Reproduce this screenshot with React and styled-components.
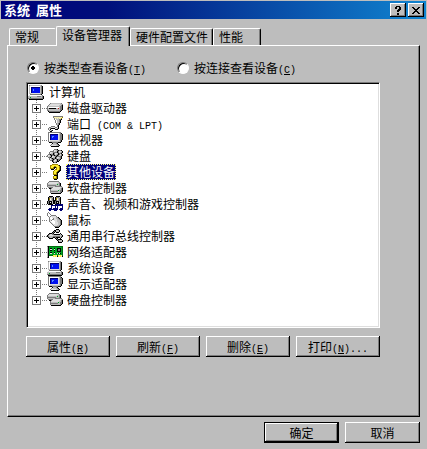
import React, {useState} from "react";
import styled, {createGlobalStyle} from "styled-components";

//Colours of the pixel icons
const palette = {
	K: "#000000",
	W: "#ffffff",
	E: "#dedede",
	L: "#bdbdbd",
	D: "#7b7b7b",
	B: "#0010ef",
	N: "#000073",
	C: "#5a8cff",
	G: "#00a521",
	F: "#006b10",
	Y: "#ffef31",
	O: "#9c8400",
	R: "#bd1818",
	P: "#f7efad",
};

//Pixel icons, one letter for each pixel
const icons = {
	computer: [
		"................",
		".DLLLLLLLLLLLD..",
		".LWWWWWWWWWWLDK.",
		".LWNNNNNNNNNLDK.",
		".LWNBBBBBBBBLDK.",
		".LWNBCBBBBBBLDK.",
		".LWNBCBBBBBBLDK.",
		".LWNBBBBBBBBLDK.",
		".LWNBBBBBBBBLDK.",
		".LLEEEEEEEEELDK.",
		"..DDDDDDDDDDDK..",
		".EWWWWWWWWWWWED.",
		"LLLLLLLLLDDDDLDK",
		"LLGLLLLLLLLLLLDK",
		"DDDDDDDDDDDDDDDK",
		".KKKKKKKKKKKKKK.",
	],
	drive: [
		"................",
		"................",
		"................",
		"...DLLLLLLLLLLD.",
		"..DEEEEEEEEEELLD",
		".DEEEEEEEEEELLDK",
		"DLLLLLLLLLLLLDDK",
		"DWWWWWWWWWWWLDDK",
		"DLKKKKKKKLLRLDDK",
		"DLLLLLLLLLLLLDDK",
		"DDLLLLLLLLLLLDK.",
		".KDDDDDDDDDDDK..",
		"..KKKKKKKKKKK...",
		"................",
		"................",
		"................",
	],
	port: [
		"......DDDDDDDDDD",
		"......DPPPPPPPPO",
		".......DPLPLPPO.",
		".......DWLLLDDK.",
		"........DWLLDK..",
		"........DWLLDK..",
		"........DWLLDK..",
		".........DLDK...",
		".........DLDK...",
		"..........DK....",
		"....DDDD..DK....",
		"..DDEEEEDDEK....",
		".DEDKKKKEEDK....",
		".DEK....KKK.....",
		"..DEDK..........",
		"...KK...........",
	],
	monitor: [
		".DDDDDDDDDDDDD..",
		".DWWWWWWWWWWLDK.",
		".DWNNNNNNNNELDDK",
		".DWNBBBBBBBELDDK",
		".DWNBCCBBBBELDDK",
		".DWNBCBBBBBELDDK",
		".DWNBBBBBBBELDDK",
		".DWNBBBBBBBELDDK",
		".DWEEEEEEEEELDK.",
		".DELLLLLLLLLLDK.",
		"..KKKDDDDDDKKK..",
		".....KLLLDK.....",
		"....DELLLLDK....",
		"...DEEEEELLDK...",
		"....KKKKKKKK....",
		"................",
	],
	keyboard: [
		"................",
		".......DDDK.....",
		"......DEELDKDDK.",
		"...DDDDELLKDEELK",
		"..DEELDDDDKDELDK",
		"..DELLKDEELKDDK.",
		".DDKDDKDELDKDEDK",
		"DEEDKDDKDDKDELDK",
		"DELLKEELDKDDDDK.",
		".DDKDELLKDEELDK.",
		"..DEDKDDKDELLDK.",
		"..DELDKDEDKDDK..",
		"...DDKDEELKDK...",
		".....KDELDKK....",
		"......KDDK......",
		"................",
	],
	unknown: [
		".....OOOOOO.....",
		"...OOYYYYYYOK...",
		"...OYYYOOYYYOK..",
		"...OYYOKKOYYOK..",
		"...OOOOK.OYYOK..",
		"....KKK.OOYYOK..",
		".......OYYYOKK..",
		"......OYYYOKK...",
		"......OYYOKK....",
		"......OYYOK.....",
		"......OOOOK.....",
		".......KKKK.....",
		"......OYYOK.....",
		"......OYYOK.....",
		"......OOOOK.....",
		".......KKK......",
	],
	stack: [
		"................",
		"..DDDDDDDDDD....",
		".DEEEEEEEEELD...",
		"DEEEEEEEEELLDK..",
		"DLLLLLLLLLGLDK..",
		"DDDDDDDDDLLLDK..",
		"DLLLLLLLDDDDDDD.",
		".DDDDDEEEEEEEELD",
		"..KKDEEEEEEEELDK",
		"...DEEEEEEEELLDK",
		"...DLLLLLLLGLDDK",
		"...DDDDDDDDLLDDK",
		"...DLLLLLLLLLDK.",
		"....KKKKKKKKKK..",
		"................",
		"................",
	],
	sound: [
		"..KKKK...KKKK...",
		".KDDDLK.KDDDLK..",
		".KOPLDK.KOPLDK..",
		".KOWLDK.KOWLDK..",
		".KDLLDKKKDLLDK..",
		"KDKKKLKKDKKKLK..",
		"KDKEKLKKDKEKLK..",
		"KDKKKLKKDKKKLK..",
		".KKKKK..KNNNNNNN",
		"....NNNNNNNNNNNN",
		"....N...N.N....N",
		"....N...N.N....N",
		"..NNN.NNNNN..NNN",
		".NNNNNNNNNN.NNNN",
		"..NN...NNN...NN.",
		"................",
	],
	mouse: [
		".D..............",
		"D.D.............",
		"D..D............",
		"D...DDDDD.......",
		".D.DEEEEED......",
		"..DWWEEEELDK....",
		"..DWWWDEELLDK...",
		"..DEWDDEEELLDK..",
		"..DEDWWEEELLLDK.",
		"..DEWWWWEELLLDK.",
		"...DEWWWEEELLDK.",
		"....DEWWEEELLDK.",
		".....DEEEEELLDK.",
		"......DEEELLDK..",
		".......DDDDDK...",
		"........KKKK....",
	],
	usb: [
		"................",
		".........KKK....",
		".......KKLLLK...",
		"......KDKLLLK...",
		".....KDK.KKK....",
		"..KKKDK......K..",
		".KDEEDDKKKKKKLK.",
		"KDEEEELLLLLLLLLK",
		"KDLLLLDDDDDDDLDK",
		".KDLLDKKDKKKKLK.",
		"..KKKK..KDK..K..",
		".........KDKKKK.",
		"..........KDLLLK",
		"...........KLLLK",
		"...........KKKK.",
		"................",
	],
	network: [
		"................",
		"................",
		"DKFFFFFFFFFFFFFF",
		"LKGGGGGGGGGGGGGF",
		"LKGKKGGKGGKKKKGF",
		"LKGEEGGEGGKDDKGF",
		"LKGKKGGKGGKDDKGF",
		"LKGGGGGGGGKKKKGF",
		"LKGKKGGKGGGGGGGF",
		"LKGEEGGEGGEKEKGF",
		"LKGGGGGGGGGGGGGF",
		"LKFFFFYPYPFYPYPF",
		"LK....YPYPKYPYPK",
		"DK..............",
		"................",
		"................",
	],
};

const devices = [
	{name: "磁盘驱动器", icon: "drive"},
	{name: "端口", latin: " (COM & LPT)", icon: "port"},
	{name: "监视器", icon: "monitor"},
	{name: "键盘", icon: "keyboard"},
	{name: "其他设备", icon: "unknown"},
	{name: "软盘控制器", icon: "stack"},
	{name: "声音、视频和游戏控制器", icon: "sound"},
	{name: "鼠标", icon: "mouse"},
	{name: "通用串行总线控制器", icon: "usb"},
	{name: "网络适配器", icon: "network"},
	{name: "系统设备", icon: "computer"},
	{name: "显示适配器", icon: "monitor"},
	{name: "硬盘控制器", icon: "stack"},
];

const tabs = [
	{name: "常规", width: 47},
	{name: "设备管理器", width: 74},
	{name: "硬件配置文件", width: 83},
	{name: "性能", width: 48},
];

const actions = [
	{name: "属性", shortcut: "R"},
	{name: "刷新", shortcut: "F"},
	{name: "删除", shortcut: "E"},
	{name: "打印", shortcut: "N", rest: "..."},
];

const PixelIcon = ({name}) => (
	<IconSvg viewBox="0 0 16 16" aria-hidden="true">
		{icons[name].map((line, y) =>
			[...line].map((c, x) =>
				palette[c] ? <rect key={`${x}-${y}`} x={x} y={y} width="1" height="1" fill={palette[c]} /> : null
			)
		)}
	</IconSvg>
);

const Shortcut = ({letter, rest = ""}) => (
	<Latin>(<u>{letter}</u>){rest}</Latin>
);

const App = () => {
	const [tab, setTab] = useState("设备管理器");
	const [selected, setSelected] = useState("其他设备");

	return(
		<>
		<GlobalStyle />
		<Dialog>
			<TitleBar>
				<h1>系统<Latin> </Latin>属性</h1>
				<CaptionButton aria-label="帮助">
					<svg width="8" height="9" viewBox="0 0 8 9"><path d="M1 1h1V0h4v1h1v3H6v1H5v1H3V4h1V3h1V1H3v2H1zM3 7h2v2H3z" /></svg>
				</CaptionButton>
				<CaptionButton aria-label="关闭">
					<svg width="8" height="7" viewBox="0 0 8 7"><path d="M0 0h2v1h1v1h2V1h1V0h2v1H7v1H6v1H5v1h1v1h1v1h1v1H6V6H5V5H3v1H2v1H0V6h1V5h1V4h1V3H2V2H1V1H0z" /></svg>
				</CaptionButton>
			</TitleBar>
			<Sheet>
				<TabStrip role="tablist">
					{tabs.map((t) => (
						<Tab key={t.name} role="tab" $width={t.width} aria-selected={tab === t.name} $active={tab === t.name} onClick={() => setTab(t.name)}>{t.name}</Tab>
					))}
				</TabStrip>
				<Panel role="tabpanel">
					<ViewOptions>
						<label>
							<input type="radio" name="view" defaultChecked />
							<span>按类型查看设备<Shortcut letter="T" /></span>
						</label>
						<label>
							<input type="radio" name="view" />
							<span>按连接查看设备<Shortcut letter="C" /></span>
						</label>
					</ViewOptions>
					<Tree>
						<Root>
							<PixelIcon name="computer" />
							<span>计算机</span>
						</Root>
						<Branches>
							{devices.map((d) => (
								<Branch key={d.name}>
									<Expander aria-label="展开">
										<svg width="9" height="9" viewBox="0 0 9 9" shapeRendering="crispEdges">
											<rect width="9" height="9" fill="#7b7b7b" />
											<rect x="1" y="1" width="7" height="7" fill="#fff" />
											<path d="M2 4h5v1H2zM4 2h1v5H4z" />
										</svg>
									</Expander>
									<Dots />
									<PixelIcon name={d.icon} />
									<Device $active={selected === d.name} onClick={() => setSelected(d.name)}>
										{d.name}
										{d.latin && <Latin>{d.latin}</Latin>}
									</Device>
								</Branch>
							))}
						</Branches>
					</Tree>
					<Actions>
						{actions.map((a) => (
							<Button key={a.name}>{a.name}<Shortcut letter={a.shortcut} rest={a.rest} /></Button>
						))}
					</Actions>
				</Panel>
				<Footer>
					<Button $primary>确定</Button>
					<Button>取消</Button>
				</Footer>
			</Sheet>
		</Dialog>
		</>
	);
};

const GlobalStyle = createGlobalStyle`
	*{
		box-sizing:border-box;
	}
	body{
		margin:0;
		background:#bdbdbd;
	}
	body, button, input{
		font-family:"Noto Sans CJK SC", sans-serif;
		font-size:12px;
		line-height:16px;
		color:#000;
	}
	button{
		padding:0;
		border:0;
		background:#bdbdbd;
	}
`;

const Dialog = styled.main`
	display:flex;
	flex-direction:column;
	min-height:100vh;
	padding:1px;
`;

const TitleBar = styled.header`
	display:flex;
	align-items:center;
	gap:2px;
	height:18px;
	padding:0 2px 0 3px;
	background:linear-gradient(to right,#00007b,#00107b 25%,#1084d0);
	h1{
		flex:1;
		margin:0;
		color:#fff;
		font-size:13px;
		line-height:16px;
	}
`;

const CaptionButton = styled.button`
	display:flex;
	align-items:center;
	justify-content:center;
	width:16px;
	height:14px;
	box-shadow:inset -1px -1px #000, inset 1px 1px #fff, inset -2px -2px #7b7b7b;
	svg{
		shape-rendering:crispEdges;
	}
`;

const Sheet = styled.div`
	display:flex;
	flex:1;
	flex-direction:column;
	padding:7px 6px 5px 6px;
`;

const TabStrip = styled.div`
	display:flex;
	align-items:flex-end;
	height:19px;
	padding-left:2px;
`;

const Tab = styled.button`
	position:relative;
	z-index:${(props) => (props.$active ? 1 : 0)};
	width:${(props) => props.$width}px;
	height:${(props) => (props.$active ? 20 : 17)}px;
	margin-bottom:${(props) => (props.$active ? -1 : 0)}px;
	padding:0 0 ${(props) => (props.$active ? 4 : 0)}px 5px;
	text-align:left;
	white-space:nowrap;
	border-top:1px solid #fff;
	border-left:1px solid #fff;
	border-right:1px solid #000;
	border-radius:2px 2px 0 0;
	box-shadow:inset -1px 0 #7b7b7b;
	&:has(+ [aria-selected="true"]){
		border-right-color:#bdbdbd;
		box-shadow:none;
	}
`;

const Panel = styled.section`
	display:flex;
	flex:1;
	flex-direction:column;
	padding:14px 39px 16px 18px;
	border:1px solid #000;
	border-top-color:#fff;
	border-left-color:#fff;
	box-shadow:inset -1px -1px #7b7b7b;
`;

const ViewOptions = styled.div`
	display:grid;
	grid-template-columns:150px 1fr;
	margin-bottom:6px;
	label{
		display:flex;
		align-items:center;
		gap:5px;
		white-space:nowrap;
	}
	input{
		appearance:none;
		width:12px;
		height:12px;
		margin:0 0 0 1px;
		border:1px solid;
		border-color:#7b7b7b #fff #fff #7b7b7b;
		border-radius:50%;
		background:#fff;
		box-shadow:inset 1px 1px #000;
	}
	input:checked{
		background:radial-gradient(circle,#000 2px,#fff 2px);
	}
`;

const Latin = styled.span`
	font-family:"Liberation Mono", monospace;
	font-size:10px;
	line-height:1;
	white-space:pre;
`;

const Tree = styled.div`
	min-height:246px;
	padding:0 0 0 1px;
	background:#fff;
	border:1px solid;
	border-color:#7b7b7b #fff #fff #7b7b7b;
	box-shadow:inset 1px 1px #000, inset -1px -1px #dedede;
`;

const IconSvg = styled.svg`
	flex:none;
	width:16px;
	height:16px;
	shape-rendering:crispEdges;
`;

const Root = styled.div`
	display:flex;
	align-items:center;
	gap:5px;
	height:16px;
	margin-top:1px;
`;

const Branches = styled.ul`
	margin:0;
	padding:0;
	list-style:none;
`;

const Branch = styled.li`
	display:flex;
	align-items:center;
	height:16px;
	padding-left:4px;
	background:repeating-linear-gradient(to bottom,#7b7b7b 0 1px,#fff 1px 2px) 8px 0 / 1px 16px no-repeat;
	&:last-child{
		background-size:1px 8px;
	}
`;

const Expander = styled.button`
	display:flex;
	width:9px;
	height:9px;
`;

const Dots = styled.span`
	width:6px;
	height:1px;
	background:repeating-linear-gradient(to right,#fff 0 1px,#7b7b7b 1px 2px);
`;

const Device = styled.button`
	height:16px;
	margin-left:3px;
	padding:0 1px;
	white-space:nowrap;
	color:${(props) => (props.$active ? "#fff" : "#000")};
	background:${(props) => (props.$active ? "#00007b" : "none")};
	outline:${(props) => (props.$active ? "1px dotted #ffff7b" : "none")};
	outline-offset:-1px;
`;

const Actions = styled.div`
	display:grid;
	grid-template-columns:repeat(4, 1fr);
	gap:6px;
	margin-top:8px;
`;

const Button = styled.button`
	height:21px;
	white-space:nowrap;
	border:${(props) => (props.$primary ? "1px solid #000" : "0")};
	box-shadow:inset -1px -1px #000, inset 1px 1px #fff, inset -2px -2px #7b7b7b;
`;

const Footer = styled.footer`
	display:flex;
	justify-content:flex-end;
	gap:6px;
	margin-top:5px;
	${Button}{
		width:75px;
	}
`;

export default App;
